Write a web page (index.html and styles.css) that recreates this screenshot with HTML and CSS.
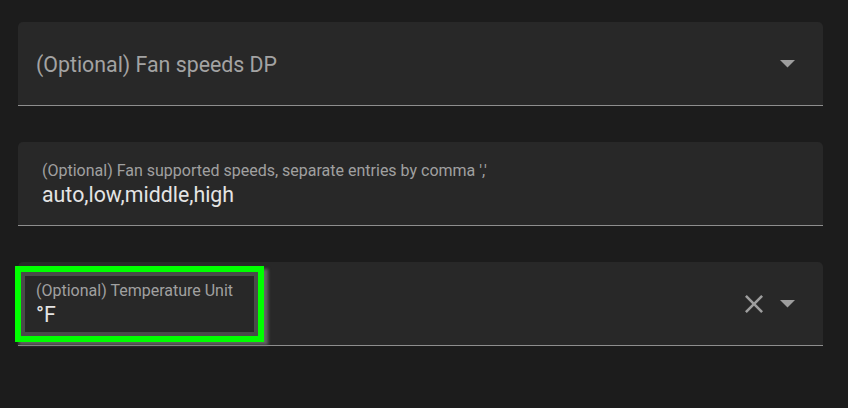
FILE: index.html
```html
<!DOCTYPE html>
<html>
<head>
<meta charset="utf-8">
<link rel="stylesheet" href="styles.css">
</head>
<body>
<div class="form">
  <div class="field select">
    <div class="content">
      <span class="label-rest">(Optional) Fan speeds DP</span>
    </div>
    <div class="icons">
      <svg class="arrow" width="15" height="8" viewBox="0 0 15 8"><polygon points="0,0 15,0 7.5,7.5" fill="#9e9e9e"/></svg>
    </div>
  </div>
  <div class="field text">
    <div class="content stacked">
      <span class="label-float">(Optional) Fan supported speeds, separate entries by comma ','</span>
      <span class="value">auto,low,middle,high</span>
    </div>
  </div>
  <div class="field select">
    <div class="content stacked">
      <span class="label-float">(Optional) Temperature Unit</span>
      <span class="value">°F</span>
    </div>
    <div class="icons">
      <svg class="close" width="18" height="18" viewBox="5 5 14 14"><path d="M19 6.41L17.59 5 12 10.59 6.41 5 5 6.41 10.59 12 5 17.59 6.41 19 12 13.41 17.59 19 19 17.59 13.41 12z" fill="#9e9e9e"/></svg>
      <svg class="arrow" width="15" height="8" viewBox="0 0 15 8"><polygon points="0,0 15,0 7.5,7.5" fill="#9e9e9e"/></svg>
    </div>
    <div class="highlight"></div>
  </div>
</div>
</body>
</html>
```
FILE: styles.css
```css
html, body {
  margin: 0;
  padding: 0;
  background: #1c1c1c;
  width: 848px;
  height: 408px;
  overflow: hidden;
  font-family: Roboto, "Noto Sans", sans-serif;
}

.form {
  display: flex;
  flex-direction: column;
  gap: 36px;
  padding: 22px 0 0 18px;
}

.field {
  position: relative;
  box-sizing: border-box;
  width: 805px;
  height: 84px;
  background: #282828;
  border-radius: 5px 5px 0 0;
  border-bottom: 1px solid #8e8e8e;
  display: flex;
  align-items: center;
}

.field.select .content {
  padding-left: 18px;
}

.field.text .content {
  padding-left: 24px;
}

.content {
  flex: 1;
  display: flex;
  flex-direction: column;
}

.content.stacked {
  align-self: flex-start;
  padding-top: 19px;
}

.label-rest {
  font-size: 21.33px;
  line-height: 26px;
  color: #a3a3a3;
  margin-top: 2px;
}

.label-float {
  font-size: 16px;
  line-height: 20px;
  color: #a0a0a0;
}

.value {
  font-size: 21.33px;
  line-height: 26px;
  color: #e4e4e4;
  margin-top: 1px;
}

.icons {
  display: flex;
  align-items: center;
  gap: 17px;
  padding-right: 28px;
}

.icons svg {
  display: block;
}

.highlight {
  position: absolute;
  left: -3px;
  top: 4px;
  width: 249px;
  height: 76px;
  box-sizing: border-box;
  border: 6px solid #00ff00;
  box-shadow: inset 0 0 0 4px #4a4a4a, 4px 3px 3px rgba(110, 110, 110, 0.85);
}
```
